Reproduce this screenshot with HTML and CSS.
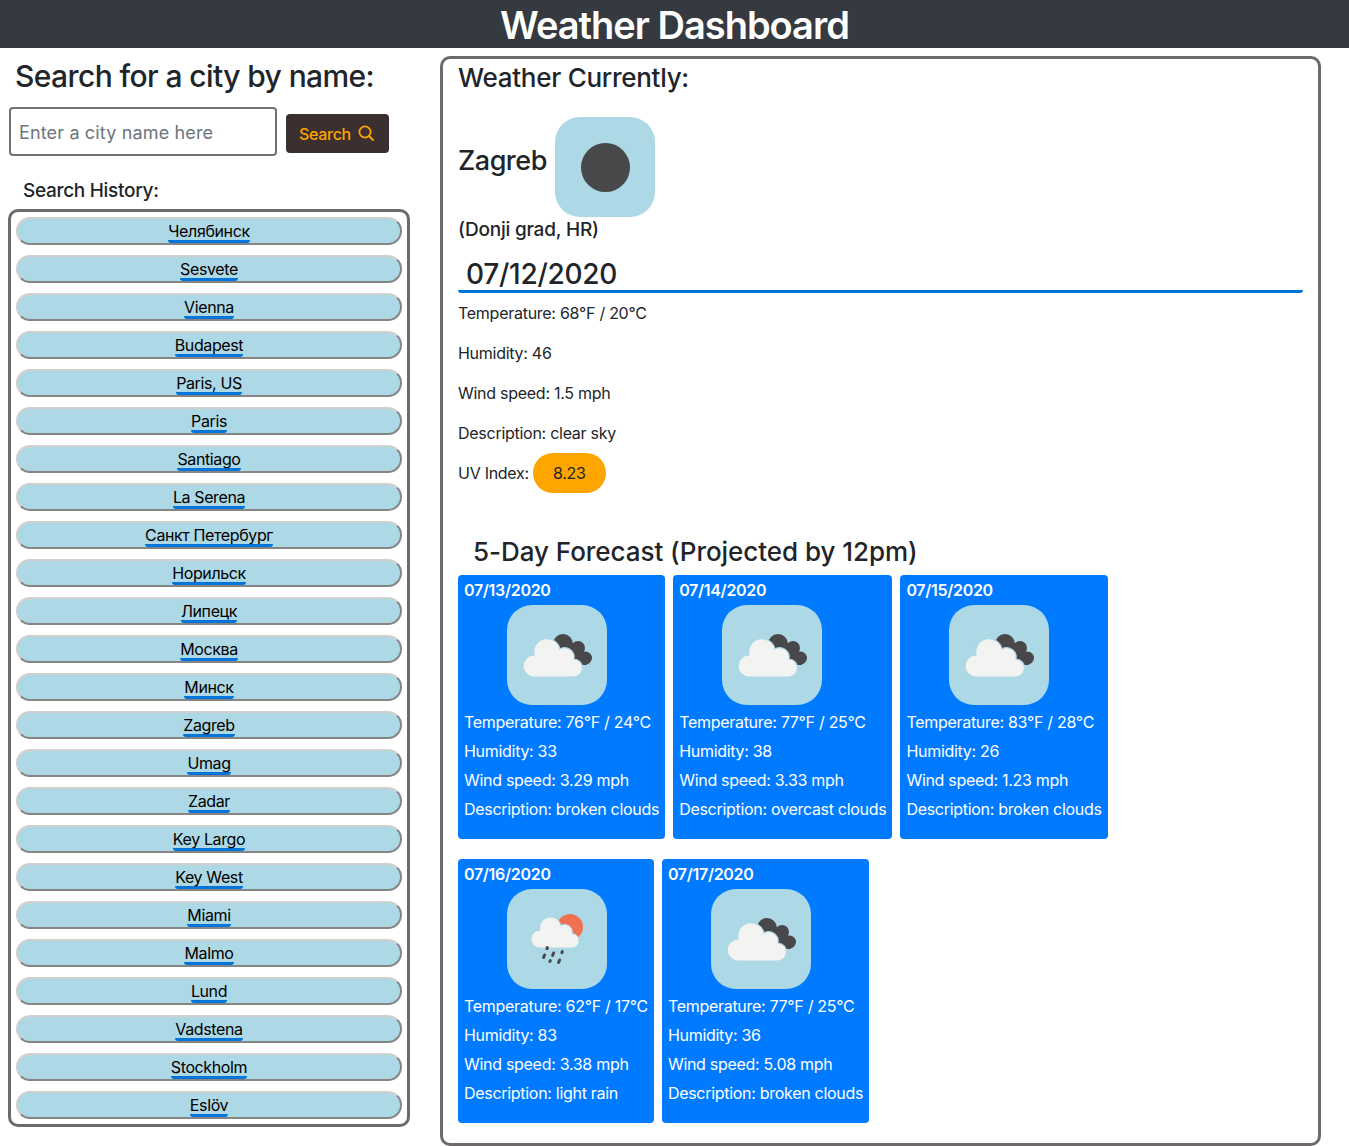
FILE: index.html
```html
<!DOCTYPE html>
<html lang="en">
<head>
    <meta charset="UTF-8">
    <meta name="viewport" content="width=device-width, initial-scale=1.0">
    <title>Weather Dashboard</title>
    <link rel="stylesheet" href="styles.css">
</head>
<body>

    <!-- shared weather icons -->
    <svg class="icon-defs" aria-hidden="true">
        <symbol id="broken-clouds" viewBox="0 0 100 100">
            <g fill="#48484a">
                <circle cx="56" cy="39" r="10"/>
                <circle cx="71" cy="43" r="7"/>
                <circle cx="78.5" cy="53" r="6.5"/>
                <path d="M50 40L72 38L80 60L60 60Z"/>
            </g>
            <path class="cloud" d="M27 72A11 11 0 0 1 27 50A12.5 12.5 0 0 1 53 44A9.5 9.5 0 0 1 67 54A9 9 0 0 1 66 72Z"/>
        </symbol>
        <symbol id="light-rain" viewBox="0 0 100 100">
            <circle cx="63" cy="38" r="13" fill="#f0714f"/>
            <path class="cloud" transform="translate(11 0.7) scale(0.81)" d="M27 72A11 11 0 0 1 27 50A12.5 12.5 0 0 1 53 44A9.5 9.5 0 0 1 67 54A9 9 0 0 1 66 72Z"/>
            <g stroke="#48484a" stroke-width="3" stroke-linecap="round">
                <path d="M40.4 58.6L40 59.6"/>
                <path d="M37.6 66L36.6 68.4"/>
                <path d="M46.6 64L45.6 66.4"/>
                <path d="M55.3 62.6L54.9 63.6"/>
                <path d="M43.3 71.6L42.9 72.4"/>
                <path d="M52.6 71L51.6 73.4"/>
            </g>
        </symbol>
    </svg>

    <header class="topbar">
        <h1>Weather Dashboard</h1>
    </header>

    <main class="page">
        <aside class="sidebar">
            <h2>Search for a city by name:</h2>
            <form class="search">
                <input type="text" class="search-input" placeholder="Enter a city name here">
                <button type="button" class="search-btn">
                    Search
                    <svg viewBox="0 0 16 16" width="16" height="16" fill="none" stroke="currentColor" stroke-width="1.8" stroke-linecap="round">
                        <circle cx="7" cy="7" r="5.6"/>
                        <path d="M11 11L15 15"/>
                    </svg>
                </button>
            </form>
            <h3 class="history-title">Search History:</h3>
            <div class="history">
                <button type="button" class="city"><span>Челябинск</span></button>
                <button type="button" class="city"><span>Sesvete</span></button>
                <button type="button" class="city"><span>Vienna</span></button>
                <button type="button" class="city"><span>Budapest</span></button>
                <button type="button" class="city"><span>Paris, US</span></button>
                <button type="button" class="city"><span>Paris</span></button>
                <button type="button" class="city"><span>Santiago</span></button>
                <button type="button" class="city"><span>La Serena</span></button>
                <button type="button" class="city"><span>Санкт Петербург</span></button>
                <button type="button" class="city"><span>Норильск</span></button>
                <button type="button" class="city"><span>Липецк</span></button>
                <button type="button" class="city"><span>Москва</span></button>
                <button type="button" class="city"><span>Минск</span></button>
                <button type="button" class="city"><span>Zagreb</span></button>
                <button type="button" class="city"><span>Umag</span></button>
                <button type="button" class="city"><span>Zadar</span></button>
                <button type="button" class="city"><span>Key Largo</span></button>
                <button type="button" class="city"><span>Key West</span></button>
                <button type="button" class="city"><span>Miami</span></button>
                <button type="button" class="city"><span>Malmo</span></button>
                <button type="button" class="city"><span>Lund</span></button>
                <button type="button" class="city"><span>Vadstena</span></button>
                <button type="button" class="city"><span>Stockholm</span></button>
                <button type="button" class="city"><span>Eslöv</span></button>
            </div>
        </aside>

        <section class="current">
            <h3 class="current-title">Weather Currently:</h3>
            <div class="place">
                <h3>Zagreb</h3>
                <div class="icon-tile">
                    <svg viewBox="0 0 100 100" width="100" height="100">
                        <circle cx="50.5" cy="50.5" r="24.5" fill="#48484a"/>
                    </svg>
                </div>
            </div>
            <h5 class="district">(Donji grad, HR)</h5>
            <h3 class="today">07/12/2020</h3>
            <p>Temperature: 68°F / 20°C</p>
            <p>Humidity: 46</p>
            <p>Wind speed: 1.5 mph</p>
            <p>Description: clear sky</p>
            <p class="uv-row">UV Index: <span class="uv">8.23</span></p>

            <h3 class="forecast-title">5-Day Forecast (Projected by 12pm)</h3>
            <div class="forecast">
                <article class="card">
                    <h5>07/13/2020</h5>
                    <div class="icon-tile"><svg width="100" height="100"><use href="#broken-clouds"/></svg></div>
                    <p>Temperature: 76°F / 24°C</p>
                    <p>Humidity: 33</p>
                    <p>Wind speed: 3.29 mph</p>
                    <p>Description: broken clouds</p>
                </article>
                <article class="card">
                    <h5>07/14/2020</h5>
                    <div class="icon-tile"><svg width="100" height="100"><use href="#broken-clouds"/></svg></div>
                    <p>Temperature: 77°F / 25°C</p>
                    <p>Humidity: 38</p>
                    <p>Wind speed: 3.33 mph</p>
                    <p>Description: overcast clouds</p>
                </article>
                <article class="card">
                    <h5>07/15/2020</h5>
                    <div class="icon-tile"><svg width="100" height="100"><use href="#broken-clouds"/></svg></div>
                    <p>Temperature: 83°F / 28°C</p>
                    <p>Humidity: 26</p>
                    <p>Wind speed: 1.23 mph</p>
                    <p>Description: broken clouds</p>
                </article>
                <article class="card">
                    <h5>07/16/2020</h5>
                    <div class="icon-tile"><svg width="100" height="100"><use href="#light-rain"/></svg></div>
                    <p>Temperature: 62°F / 17°C</p>
                    <p>Humidity: 83</p>
                    <p>Wind speed: 3.38 mph</p>
                    <p>Description: light rain</p>
                </article>
                <article class="card">
                    <h5>07/17/2020</h5>
                    <div class="icon-tile"><svg width="100" height="100"><use href="#broken-clouds"/></svg></div>
                    <p>Temperature: 77°F / 25°C</p>
                    <p>Humidity: 36</p>
                    <p>Wind speed: 5.08 mph</p>
                    <p>Description: broken clouds</p>
                </article>
            </div>
        </section>
    </main>

</body>
</html>
```

FILE: styles.css
```css
* {
    box-sizing: border-box;
}
body {
    margin: 0;
    height: 1146px;
    overflow: hidden;
    background-color: #fff;
    color: #212529;
    font-family: 'Inter', 'Noto Sans', sans-serif;
    font-size: 16px;
    letter-spacing: -0.27px;
}
h1, h2, h3, h5, p {
    margin: 0;
    font-weight: 500;
}
.icon-defs {
    display: none;
}
.cloud {
    fill: #f3f3f1;
    stroke: #add8e6;
    stroke-width: 1.2;
}
.topbar {
    height: 48px;
    background-color: #343a40;
    text-align: center;
}
.topbar h1 {
    color: #fff;
    font-size: 38px;
    font-weight: 600;
    line-height: 50px;
    letter-spacing: -1px;
}
.page {
    display: flex;
    align-items: flex-start;
}
.sidebar {
    width: 440px;
    padding: 8px 30px 0 8px;
}
.sidebar h2 {
    padding-left: 7px;
    font-size: 30px;
    line-height: 40px;
    letter-spacing: -0.6px;
}
.search {
    display: flex;
    align-items: center;
    gap: 9px;
    margin: 11px 0 0 1px;
}
.search-input {
    width: 268px;
    height: 49px;
    padding: 1px 8px 0;
    border: 2px solid #767171;
    border-radius: 4px;
    font-family: inherit;
    font-size: 18px;
    letter-spacing: 0.15px;
}
.search-input::placeholder {
    color: #6c757d;
}
.search-btn {
    display: flex;
    align-items: center;
    gap: 7px;
    height: 39px;
    margin-top: 4px;
    padding: 0 15px 0 13px;
    border: none;
    border-radius: 4px;
    background-color: #3b2f2f;
    color: #ffa500;
    font-family: inherit;
    font-size: 16px;
    font-weight: 500;
    letter-spacing: -0.3px;
}
.search-btn svg {
    margin-top: -2px;
}
.history-title {
    margin: 23px 0 6px 15px;
    font-size: 19px;
    line-height: 24px;
    letter-spacing: -0.3px;
}
.history {
    display: flex;
    flex-direction: column;
    gap: 10px;
    height: 918px;
    padding: 5px;
    border: 3px solid #6f6a6a;
    border-radius: 10px;
}
.city {
    flex: none;
    height: 28px;
    padding: 0;
    border: 2px solid;
    border-color: #d2cfcf #858585 #858585 #d2cfcf;
    border-radius: 14px;
    background-color: #add8e6;
    color: #000;
    font-family: inherit;
    font-size: 16px;
    line-height: 24px;
    letter-spacing: -0.38px;
}
.city span {
    display: inline-block;
    height: 24px;
    border-bottom: 3px solid #0074d9;
    border-radius: 3px;
}
.current {
    width: 881px;
    height: 1090px;
    margin-top: 8px;
    padding: 2px 15px 0 15px;
    border: 3px solid #6f6a6a;
    border-radius: 10px;
}
.current-title {
    font-size: 26px;
    line-height: 34px;
}
.place {
    display: flex;
    align-items: center;
    gap: 8px;
    margin-top: 22px;
}
.place h3 {
    margin-bottom: 14px;
    font-size: 27px;
    letter-spacing: -0.5px;
}
.icon-tile {
    width: 100px;
    height: 100px;
    border-radius: 25px;
    background-color: #add8e6;
}
.district {
    margin-top: 1px;
    font-size: 19px;
    line-height: 24px;
    letter-spacing: -0.2px;
}
.today {
    height: 38px;
    margin-top: 13px;
    padding-left: 8px;
    border-bottom: 3px solid #0074d9;
    border-radius: 3px;
    font-size: 28px;
    line-height: 39px;
}
.current > p {
    font-weight: 400;
    line-height: 24px;
    margin-top: 16px;
}
.current > p:first-of-type {
    margin-top: 8px;
}
.uv-row {
    display: flex;
    align-items: center;
    gap: 4px;
    height: 40px;
    margin-top: 8px !important;
}
.uv {
    width: 73px;
    height: 40px;
    border-radius: 20px;
    background-color: #ffa500;
    line-height: 40px;
    text-align: center;
}
.forecast-title {
    margin-top: 40px;
    padding-left: 15px;
    font-size: 26px;
    line-height: 38px;
    letter-spacing: -0.05px;
}
.forecast {
    display: flex;
    flex-wrap: wrap;
    align-items: flex-start;
    gap: 20px 8px;
    margin-top: 4px;
}
.card {
    height: 264px;
    padding: 5px 6px 0;
    border-radius: 4px;
    background-color: #007bff;
    color: #fff;
}
.card h5 {
    font-size: 16px;
    font-weight: 600;
    line-height: 21px;
    letter-spacing: -0.3px;
}
.card .icon-tile {
    margin: 4px 0 3px 43px;
}
.card p {
    font-weight: 400;
    font-size: 16px;
    line-height: 29px;
    letter-spacing: -0.295px;
    white-space: nowrap;
}
```
